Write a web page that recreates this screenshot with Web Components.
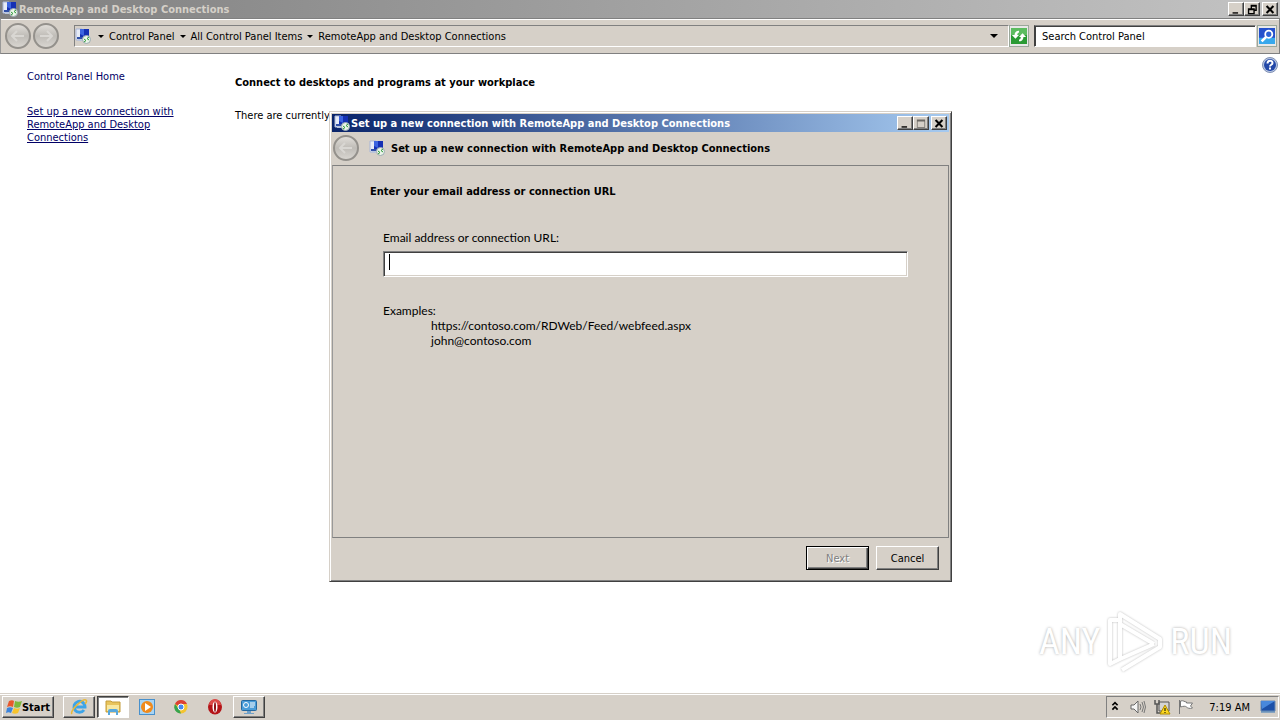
<!DOCTYPE html>
<html lang="en">
<head>
<meta charset="utf-8">
<title>RemoteApp and Desktop Connections</title>
<style>
  html { height: 100%; }
  body {
    --face: #d6d0c8;
    --shadow: #808080;
    --dark: #404040;
    --ui: "DejaVu Sans Condensed", "DejaVu Sans", sans-serif;
    margin: 0;
    min-height: 100%;
    display: flex;
    flex-direction: column;
    background: #fff;
    color: #000;
    font: 11px/13px var(--ui);
    overflow: hidden;
  }
  explorer-window { flex: 1; }
</style>
</head>
<body>
<explorer-window></explorer-window>
<task-bar></task-bar>
<connection-wizard></connection-wizard>
<any-watermark></any-watermark>

<script>
const define = (name, html, setup) => {
  customElements.define(name, class extends HTMLElement {
    connectedCallback() {
      if (this.shadowRoot) return;
      this.attachShadow({ mode: "open" }).innerHTML = html;
      if (setup) setup(this, this.shadowRoot);
    }
  });
};

const icons = {
  remote: `<path d="M1 1h6v11H1z" fill="#e6ebf6" stroke="#a9b6d8"/><path d="M5 1h9v8H5z" fill="#1430b4"/><path d="M5 1h4v7L5 6z" fill="#3c64e0"/><path d="M2 9h8v2H2z" fill="#3050a8"/><path d="M3 11h5v2H3z" fill="#b8c4dc"/><circle cx="11.500" cy="11.500" r="4" fill="#eaf4e8" stroke="#9aaab0"/><path d="M9 11l2 1.500L9 14M14 9l-2 1.500 2 1.500" fill="none" stroke="#2e9a3a"/>`,
  refresh: `<rect width="18" height="18" fill="#2a9a34"/><path d="M0 0h18v8H0z" fill="#5cbc60"/><path d="M9 3C6 3 4 5 4 8H1l4 4 4-4H7c0-2 1-3 2-3zM9 15c3 0 5-2 5-5h3l-4-4-4 4h2c0 2-1 3-2 3z" fill="#fff"/>`,
  search: `<rect width="18" height="18" fill="#2450cc"/><path d="M0 11h18v7H0z" fill="#38a8ec"/><circle cx="11" cy="7" r="4" fill="#2b62d6" stroke="#fff" stroke-width="2"/><path d="M8 10l-5 5" stroke="#fff" stroke-width="3"/>`,
  help: `<circle cx="8" cy="8" r="7.500" fill="#b9c8e4" stroke="#8090b4"/><circle cx="8" cy="8" r="6" fill="#2348a8"/><path d="M5.500 6.500c0-3.500 5-3.500 5-.5 0 2-2.500 1.500-2.500 3.500M8 10.500v2" fill="none" stroke="#fff" stroke-width="2"/>`,
  arrow: `<path d="M5 7h6L8 10z"/>`,
  expand: `<path d="M4 6h8l-4 4z"/>`,
  min: `<path d="M3 12h8v2H3z"/>`,
  max: `<path d="M2 2h12v12H2zM3 5v8h10V5z" fill-rule="evenodd"/>`,
  restore: `<path d="M6 1h9v9h-3v5H2V6h4zM8 4v2h4v2h1V4zM4 9v4h6V9z" fill-rule="evenodd"/>`,
  close: `<path d="M3 3l10 10M13 3L3 13" stroke="#000" stroke-width="3"/>`,
  flag: `<path d="M3 2c2-1 4-1 5 0L7 8C5 7 3 7 1 8z" fill="#e8582c"/><path d="M9 2c2 1 5 1 7 0l-2 6c-2 1-4 1-6 0z" fill="#7cb83c"/><path d="M1 9c2-1 4-1 6 0l-2 5c-2-1-3-1-5 0z" fill="#3c84dc"/><path d="M8 9c2 1 4 1 6 0l-2 5c-2 1-4 1-6 0z" fill="#f8c42c"/>`,
  ie: `<path d="M13 11a5.500 5.500 0 1 1 1-3H4" fill="none" stroke="#3da4e8" stroke-width="3"/><path d="M1 15C-2 12 12-1 15 1c1 1 0 3-1 4" fill="none" stroke="#e8b838" stroke-width="1.500"/>`,
  folder: `<path d="M1 2h5l1 1h8v10H1z" fill="#e8c45c" stroke="#c49c38"/><path d="M2 6h12v6H2z" fill="#f8e8a0"/><path d="M3 16v-4q0-2 2-2h6q2 0 2 2v4h-2v-3H5v3z" fill="#58a8dc"/>`,
  media: `<rect x=".5" y=".5" width="15" height="15" fill="#a8d4f4" stroke="#4890cc"/><circle cx="8" cy="8" r="6" fill="#f08a1c"/><path d="M6 4l6 4-6 4z" fill="#fff"/>`,
  chrome: `<circle cx="8" cy="8" r="6.500" fill="#f4c430"/><path d="M8 8L2 5a6.500 6.500 0 0 1 12 0H8z" fill="#dc4034"/><path d="M2 5l4 5 2 4.500A6.500 6.500 0 0 1 2 5z" fill="#36a350"/><circle cx="8" cy="8" r="3" fill="#4688f0" stroke="#fff"/>`,
  opera: `<ellipse cx="8" cy="8" rx="7" ry="7.500" fill="#b41418"/><path d="M2 6a6 6 0 0 1 12 0" fill="#dc4a48"/><ellipse cx="8" cy="8" rx="2.500" ry="5.500" fill="#fff"/><ellipse cx="8" cy="8" rx="1" ry="5" fill="#8c1014"/>`,
  panel: `<rect x=".5" y="1.500" width="15" height="10" rx="1" fill="#4a9cd8" stroke="#2468a0"/><circle cx="5" cy="6" r="2.500" fill="none" stroke="#fff"/><path d="M9 4h5M9 6h5M9 8h4" stroke="#fff"/><path d="M6 12h4v2h3v1H3v-1h3z" fill="#70a0c8"/>`,
  chevrons: `<path d="M5 6l3-3 3 3M5 11l3-3 3 3" fill="none" stroke="#000" stroke-width="2"/>`,
  sound: `<path d="M1 6h3l4-4v12l-4-4H1z" fill="#f4f4f4" stroke="#666"/><path d="M10 5q2 3 0 6M12 3q3 5 0 10M14 2q3 6 0 12" fill="none" stroke="#777"/>`,
  network: `<path d="M5 3h10v9H5z" fill="#d4d4d4" stroke="#555"/><path d="M1 1v4h4V1M3 5v9h5" fill="none" stroke="#555" stroke-width="1.500"/><path d="M11 6l5 9H6z" fill="#fcd820" stroke="#b08c00"/><path d="M11 9v3M11 13v1" stroke="#000"/>`,
  pennant: `<path d="M1.500 1v14" stroke="#777"/><path d="M2.500 2c3-1 4 1 6 1v1h6l-2 3 2 2c-3 1-5 0-6-1s-3-1-6 0z" fill="#fff" stroke="#777"/>`,
  monitor: `<path d="M1 2h14v10H1z" fill="#1c50a8" stroke="#6888b0"/><path d="M1 2h14L2 10z" fill="#4888dc"/><path d="M1 13h14" stroke="#3878b8"/>`
};

define("ui-icon", `<style>
  :host { display: block; flex: none; width: 16px; height: 16px; }
  svg { display: block; width: 100%; height: 100%; overflow: visible; }
</style>`, (host, root) => {
  const name = host.getAttribute("name");
  const side = name === "refresh" || name === "search" ? 18 : 16;
  root.innerHTML += `<svg viewBox="0 0 ${side} ${side}" aria-hidden="true">${icons[name]}</svg>`;
});

// round back / forward button
define("nav-button", `<style>
  :host { display: block; flex: none; }
  button {
    display: block; width: 26px; height: 26px; padding: 0;
    border: 2px solid #94918c; border-radius: 50%;
    background: linear-gradient(#e0ddd8, #bfbcb7 50%, #d8d5d0);
  }
  svg { display: block; width: 22px; height: 22px; }
  :host([forward]) svg { transform: scaleX(-1); }
</style>
<button disabled aria-label="Navigate">
  <svg viewBox="0 0 22 22"><path d="M10 6l-5 5 5 5M6 11h11" fill="none" stroke="#d9d7d3" stroke-width="2"/></svg>
</button>`);

define("title-bar", `<style>
  :host {
    display: flex; align-items: center; height: 18px; padding-right: 2px;
    background: linear-gradient(90deg, var(--from), var(--to));
    color: var(--caption); font-weight: bold;
  }
  .name { flex: 1; padding-left: 1px; white-space: nowrap; }
  .controls { display: flex; }
  button {
    display: grid; place-items: center;
    width: 16px; height: 14px; padding: 0; overflow: hidden;
    background: var(--face); border: 1px solid; border-color: #fff var(--dark) var(--dark) #fff;
    box-shadow: inset -1px -1px var(--shadow);
  }
  button:last-child { margin-left: 2px; }
  button ui-icon { width: 12px; height: 11px; }
</style>
<ui-icon name="remote"></ui-icon>
<span class="name"><slot></slot></span>
<div class="controls">
  <button aria-label="Minimize"><ui-icon name="min"></ui-icon></button>
  <button class="size" aria-label="Maximize"></button>
  <button aria-label="Close"><ui-icon name="close"></ui-icon></button>
</div>`, (host, root) => {
  const size = root.querySelector(".size");
  const fixed = host.hasAttribute("fixed");
  size.disabled = fixed;
  size.innerHTML = `<ui-icon name="${fixed ? "max" : "restore"}"${fixed ? ' style="opacity:.5"' : ""}></ui-icon>`;
});

define("address-bar", `<style>
  :host {
    display: flex; align-items: center; height: 34px; padding: 0 2px 0 4px;
    background: var(--face); border: 1px solid var(--shadow);
    border-left-color: #999; box-shadow: inset 0 1px #fff;
  }
  .path {
    flex: 1; display: flex; align-items: center; height: 20px; margin-left: 15px;
    border: 1px solid; border-color: var(--shadow) #fff #fff var(--shadow);
  }
  .path a { color: #000; text-decoration: none; white-space: nowrap; }
  .drop { width: 16px; }
  .drop:nth-child(2) { margin-left: 2px; }
  .drop:last-child { margin-left: auto; margin-right: 6px; }
  button { display: block; padding: 1px; border: 1px solid #9aa79a; background: #e8e8e8; }
  button ui-icon { width: 16px; height: 18px; }
  input {
    box-sizing: border-box; width: 222px; height: 22px; margin: 0 1px 0 5px; padding: 1px 6px 0 7px;
    border: 1px solid; border-color: var(--shadow) #fff #fff var(--dark);
    box-shadow: inset 1px 1px var(--dark); border-radius: 0; font: inherit; color: #000;
  }
  input::placeholder { color: #000; opacity: 1; }
</style>
<nav-button></nav-button><nav-button forward style="margin-left:2px"></nav-button>
<nav class="path">
  <ui-icon name="remote"></ui-icon>
  <ui-icon class="drop" name="arrow"></ui-icon><a href="#">Control Panel</a>
  <ui-icon class="drop" name="arrow"></ui-icon><a href="#">All Control Panel Items</a>
  <ui-icon class="drop" name="arrow"></ui-icon><a href="#">RemoteApp and Desktop Connections</a>
  <ui-icon class="drop" name="expand"></ui-icon>
</nav>
<button aria-label="Refresh"><ui-icon name="refresh"></ui-icon></button>
<input type="text" aria-label="Search" placeholder="Search Control Panel">
<button aria-label="Go"><ui-icon name="search"></ui-icon></button>`);

define("explorer-window", `<style>
  :host { display: flex; flex-direction: column; }
  title-bar { --from: #808080; --to: #c3c3c3; --caption: #d5d0c8; padding-left: 2px; }
  .body { flex: 1; display: flex; }
  aside { width: 150px; padding: 16px 58px 0 27px; }
  aside a { display: block; color: #000066; }
  .home { text-decoration: none; margin-bottom: 22px; }
  main { flex: 1; padding-top: 22px; white-space: nowrap; }
  h1 { margin: 0 0 20px; font: inherit; font-weight: bold; }
  p { margin: 0; }
  .help { align-self: flex-start; padding: 3px 2px; border: 0; background: none; }
</style>
<title-bar>RemoteApp and Desktop Connections</title-bar>
<address-bar></address-bar>
<div class="body">
  <aside>
    <a class="home" href="#">Control Panel Home</a>
    <a href="#">Set up a new connection with RemoteApp and Desktop Connections</a>
  </aside>
  <main>
    <h1>Connect to desktops and programs at your workplace</h1>
    <p>There are currently no connections available on this computer.</p>
  </main>
  <button class="help" aria-label="Help"><ui-icon name="help"></ui-icon></button>
</div>`);

define("connection-wizard", `<style>
  :host {
    position: absolute; left: 329px; top: 111px; box-sizing: border-box; width: 623px;
    padding: 2px; background: var(--face);
    border: 1px solid; border-color: var(--face) var(--dark) var(--dark) var(--face);
    box-shadow: inset 1px 1px #fff, inset -1px -1px var(--shadow);
  }
  title-bar { --from: #0a246a; --to: #a6caf0; --caption: #fff; padding-left: 2px; }
  header { display: flex; align-items: center; height: 32px; padding: 0 0 1px 1px; font-weight: bold; }
  header ui-icon { margin: 0 6px 0 10px; }
  section { min-height: 352px; padding: 19px 40px 0 37px; border: 1px solid var(--shadow); border-left-color: #999; }
  h2 { margin: 0; font: inherit; font-weight: bold; }
  form { padding-left: 13px; font: 12px/15px Lato, "Noto Sans", sans-serif; }
  label { display: block; margin: 32px 0 6px; }
  input {
    display: block; box-sizing: border-box; width: 100%; height: 26px; padding: 0 5px;
    border: 1px solid; border-color: var(--shadow) #fff #fff var(--shadow);
    box-shadow: inset 1px 1px var(--dark), inset -1px -1px var(--face);
    outline: 0; font: inherit; background: #fff;
  }
  .field { display: grid; }
  .field > * { grid-area: 1 / 1; }
  .caret { width: 1px; height: 16px; margin: 3px 0 0 6px; background: #000; }
  dl { margin: 26px 0 0; }
  dd { margin: 0 0 0 48px; }
  footer { display: flex; justify-content: flex-end; gap: 7px; padding: 8px 10px 9px; }
  footer button {
    width: 63px; height: 24px; padding: 0; font: inherit; background: var(--face);
    border: 1px solid; border-color: #fff var(--dark) var(--dark) #fff;
    box-shadow: inset -1px -1px var(--shadow);
  }
  footer button:disabled {
    color: #808080; text-shadow: 1px 1px #fff; border-color: #000;
    box-shadow: inset 1px 1px #fff, inset -1px -1px var(--dark), inset -2px -2px var(--shadow);
  }
</style>
<title-bar fixed>Set up a new connection with RemoteApp and Desktop Connections</title-bar>
<header>
  <nav-button></nav-button>
  <ui-icon name="remote"></ui-icon>
  <span>Set up a new connection with RemoteApp and Desktop Connections</span>
</header>
<section>
  <h2>Enter your email address or connection URL</h2>
  <form>
    <label for="url">Email address or connection URL:</label>
    <div class="field"><input id="url" type="text"><span class="caret"></span></div>
    <dl>
      <dt>Examples:</dt>
      <dd>https://contoso.com/RDWeb/Feed/webfeed.aspx</dd>
      <dd>john@contoso.com</dd>
    </dl>
  </form>
</section>
<footer>
  <button disabled>Next</button>
  <button>Cancel</button>
</footer>`);

define("task-bar", `<style>
  :host {
    display: flex; align-items: center; height: 26px; padding: 0 1px 0 2px;
    background: var(--face); border-top: 1px solid var(--face); box-shadow: inset 0 1px #fff;
  }
  button {
    display: flex; align-items: center; justify-content: center; width: 32px; height: 22px;
    padding: 0; border: 1px solid transparent; background: none; font: inherit; box-sizing: border-box;
  }
  .apps { display: flex; gap: 2px; margin-left: 9px; }
  .start, .open {
    background: var(--face); border-color: #fff var(--dark) var(--dark) #fff;
    box-shadow: inset -1px -1px var(--shadow);
  }
  .start { width: 52px; font-weight: bold; }
  .active {
    background: #fff; border-color: var(--dark) #fff #fff var(--dark);
    box-shadow: inset 1px 1px var(--shadow);
  }
  .tray {
    display: flex; align-items: center; gap: 8px; height: 20px; margin-left: auto; padding: 0 2px 0 1px;
    border: 1px solid; border-color: var(--shadow) #fff #fff var(--shadow);
  }
  .tray ui-icon:first-child { width: 14px; }
  time { padding: 0 2px 0 7px; }
</style>
<button class="start"><ui-icon name="flag"></ui-icon>Start</button>
<div class="apps">
  <button class="open" aria-label="Internet Explorer"><ui-icon name="ie"></ui-icon></button>
  <button class="active" aria-label="Explorer"><ui-icon name="folder"></ui-icon></button>
  <button aria-label="Media Player"><ui-icon name="media"></ui-icon></button>
  <button aria-label="Chrome"><ui-icon name="chrome"></ui-icon></button>
  <button aria-label="Opera"><ui-icon name="opera"></ui-icon></button>
  <button class="open" aria-label="Control Panel"><ui-icon name="panel"></ui-icon></button>
</div>
<div class="tray">
  <ui-icon name="chevrons"></ui-icon><ui-icon name="sound"></ui-icon>
  <ui-icon name="network"></ui-icon><ui-icon name="pennant"></ui-icon>
  <time>7:19 AM</time><ui-icon name="monitor"></ui-icon>
</div>`);

define("any-watermark", `<style>
  :host {
    position: absolute; right: 48px; bottom: 46px; display: flex; align-items: center; gap: 6px;
    font: 36px/64px "Roboto Condensed", "Open Sans Condensed", Roboto, sans-serif; color: #fff;
    text-shadow: 0 0 3px #aaa; pointer-events: none;
  }
  svg { width: 58px; height: 64px; filter: drop-shadow(0 0 1px #bbb); }
</style>
<span>ANY</span>
<svg viewBox="0 0 58 64" fill="none" stroke="#fff" stroke-width="4" stroke-linejoin="round">
  <path d="M14 48V4l40 25v8L16 60M14 14l34 20M12 10H4v44l10-5 34-15"/>
</svg>
<span>RUN</span>`);
</script>
</body>
</html>
